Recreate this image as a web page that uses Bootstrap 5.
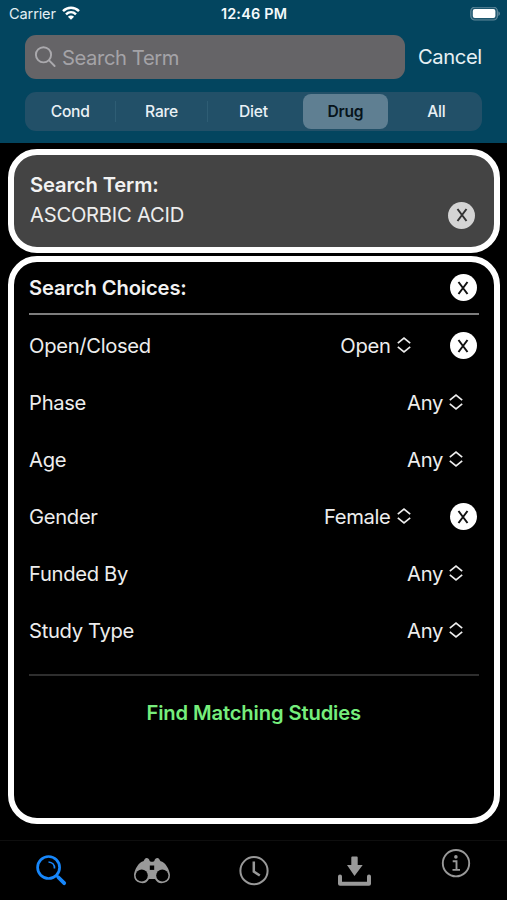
<!DOCTYPE html>
<html lang="en">
<head>
<meta charset="utf-8">
<meta name="viewport" content="width=device-width, initial-scale=1">
<title>Study Search</title>
<link href="https://cdn.jsdelivr.net/npm/bootstrap@5.3.0/dist/css/bootstrap.min.css" rel="stylesheet">
<style>
body{background:#000;color:#ededed;font-family:Inter,"Liberation Sans",sans-serif;font-size:20.2px;line-height:30px;letter-spacing:-.33px;height:900px;overflow:hidden}
.top-area{background:#03455f;height:143px;flex:none}
.status-line{height:27px;padding:0 7px 0 9px;font-size:14.6px;line-height:27px;letter-spacing:-.15px;color:#e4eff4}
.status-line>div{flex:1 1 0}
.carrier-text{padding-top:1px}
.wifi-icon{margin:0 0 1px 6px}
.clock-text{font-weight:600;font-size:14.4px;letter-spacing:.2px;color:#f4fafc;margin-left:-1px}
.search-line{margin-top:8px;padding-left:25px;height:44px}
.search-box{width:379.500px;height:44px;background:#656467;border-radius:11px;padding-left:9px;color:#a4a3a7;gap:6px}
.hint-text{padding-top:2px;letter-spacing:-.4px}
.cancel-link{color:#e6f0f4;margin-left:13.5px;text-decoration:none;letter-spacing:-.4px}
.segments{margin:13px 25px 0;height:39px;border-radius:11px;background:#225068;display:grid;grid-template-columns:repeat(5,1fr);align-items:center;font-size:15.6px;font-weight:500;letter-spacing:-.2px;line-height:35px;color:#e9f1f5}
.segments>div{text-align:center}
.segments .picked{background:#5f7f92;color:#06131b;font-weight:600;height:35px;margin:0 2.500px 0 3.500px;border-radius:8px}
.segments .divided{border-right:1px solid #2e5d74;height:21px;line-height:21px}
.panel{border:6.5px solid #fff;border-radius:29px;margin:0 7px 0 7.5px}
.term-panel{background:#444;height:104px;margin-top:6px;padding:15px 19px 0 16.500px}
.choice-panel{height:568px;margin-top:3px;padding:0 15px 0 15px}
.title-text{font-weight:600;letter-spacing:-.14px;color:#f2f2f2}
.term-text{letter-spacing:-.24px}
.clear-btn{width:27px;height:27px;border-radius:50%;background:#fff;border:0;padding:0;flex:none;display:flex;align-items:center;justify-content:center;margin-right:2.5px}
.term-panel .clear-btn{background:#d4d4d4;margin-right:0}
.head-row{height:51px}
.head-row .title-text,.choice-row>.me-auto{padding-left:.6px}
.rule{height:2px;background:#7d7d7d;flex:none}
.rule.dim{background:#2e2e2e;margin-top:15px}
.rows-wrap{padding-top:2px}
.choice-row{height:57px}
.pick{gap:6px}
.pick svg{margin-bottom:1px}
.pick.alone{margin-right:16px}
.pick.with-clear{margin-right:39px}
.find-btn{color:#76ee7c;font-weight:600;text-decoration:none;letter-spacing:-.13px}
.find-wrap{padding-top:22px}
.tabs-bar{margin-top:15.5px;height:60px;border-top:1px solid #0e0e0e}
.tabs-bar a{flex:1 1 0;display:flex;justify-content:center;align-items:flex-start}
svg{display:block;flex:none}
</style>
</head>
<body class="d-flex flex-column m-0">
<header class="top-area">
  <div class="status-line d-flex align-items-center">
    <div class="d-flex align-items-center"><span class="carrier-text">Carrier</span>
      <svg class="wifi-icon" width="18" height="14" viewBox="0 0 18 14" fill="none" stroke="#fff" stroke-width="2.5"><path d="M1 5.1C5.6.6 12.4.6 17 5.1M4 8.3c2.900-2.800 7.100-2.800 10 0"/><path d="M9 13.800 5.900 10.700c1.700-1.600 4.500-1.600 6.200 0z" fill="#fff" stroke="none"/></svg></div>
    <span class="clock-text">12:46 PM</span>
    <div class="d-flex justify-content-end"><svg width="31" height="14" viewBox="0 0 31 14"><rect x="1.800" y=".2" width="26.600" height="12.800" rx="4" fill="#1d566e" stroke="#5e8799" stroke-width="1.200"/><rect x="3.800" y="2" width="22.600" height="9" rx="2" fill="#fff"/><path d="M29.300 4.200c2.200.8 2.200 3.900 0 4.700z" fill="#5e8799"/></svg></div>
  </div>
  <div class="search-line d-flex align-items-center">
    <div class="search-box d-flex align-items-center">
      <svg width="22" height="22" viewBox="0 0 22 22" fill="none" stroke="#aaa9ad" stroke-width="1.900" stroke-linecap="round"><circle cx="9.500" cy="8.800" r="7.600"/><path d="m15.100 14.400 5.500 5.600"/></svg>
      <span class="hint-text">Search Term</span>
    </div>
    <a class="cancel-link" href="#">Cancel</a>
  </div>
  <div class="segments">
    <div class="divided">Cond</div><div class="divided">Rare</div><div>Diet</div><div class="picked">Drug</div><div>All</div>
  </div>
</header>
<main>
  <section class="panel term-panel">
    <div class="title-text">Search Term:</div>
    <div class="d-flex justify-content-between align-items-center"><span class="term-text">ASCORBIC ACID</span>
      <button class="clear-btn" aria-label="Clear"><svg width="12" height="14" viewBox="0 0 12 14" fill="none" stroke="#333" stroke-width="2"><path d="m1.500 1 9 12m0-12-9 12"/></svg></button></div>
  </section>
  <section class="panel choice-panel d-flex flex-column">
    <div class="head-row d-flex justify-content-between align-items-center"><span class="title-text">Search Choices:</span>
      <button class="clear-btn" aria-label="Clear"><svg width="12" height="14" viewBox="0 0 12 14" fill="none" stroke="#111" stroke-width="2"><path d="m1.500 1 9 12m0-12-9 12"/></svg></button></div>
    <div class="rule"></div>
    <div class="rows-wrap">
      <div class="choice-row d-flex align-items-center"><span class="me-auto">Open/Closed</span><span class="pick with-clear d-flex align-items-center">Open <svg width="14" height="16" viewBox="0 0 14 16" fill="none" stroke="#ededed" stroke-width="1.700"><path d="m.8 6.200 6.200-5 6.200 5M.8 9.800l6.200 5 6.200-5"/></svg></span><button class="clear-btn" aria-label="Clear"><svg width="12" height="14" viewBox="0 0 12 14" fill="none" stroke="#111" stroke-width="2"><path d="m1.500 1 9 12m0-12-9 12"/></svg></button></div>
      <div class="choice-row d-flex align-items-center"><span class="me-auto">Phase</span><span class="pick alone d-flex align-items-center">Any <svg width="14" height="16" viewBox="0 0 14 16" fill="none" stroke="#ededed" stroke-width="1.700"><path d="m.8 6.200 6.200-5 6.200 5M.8 9.800l6.200 5 6.200-5"/></svg></span></div>
      <div class="choice-row d-flex align-items-center"><span class="me-auto">Age</span><span class="pick alone d-flex align-items-center">Any <svg width="14" height="16" viewBox="0 0 14 16" fill="none" stroke="#ededed" stroke-width="1.700"><path d="m.8 6.200 6.200-5 6.200 5M.8 9.800l6.200 5 6.200-5"/></svg></span></div>
      <div class="choice-row d-flex align-items-center"><span class="me-auto">Gender</span><span class="pick with-clear d-flex align-items-center">Female <svg width="14" height="16" viewBox="0 0 14 16" fill="none" stroke="#ededed" stroke-width="1.700"><path d="m.8 6.200 6.200-5 6.200 5M.8 9.800l6.200 5 6.200-5"/></svg></span><button class="clear-btn" aria-label="Clear"><svg width="12" height="14" viewBox="0 0 12 14" fill="none" stroke="#111" stroke-width="2"><path d="m1.500 1 9 12m0-12-9 12"/></svg></button></div>
      <div class="choice-row d-flex align-items-center"><span class="me-auto">Funded By</span><span class="pick alone d-flex align-items-center">Any <svg width="14" height="16" viewBox="0 0 14 16" fill="none" stroke="#ededed" stroke-width="1.700"><path d="m.8 6.200 6.200-5 6.200 5M.8 9.800l6.200 5 6.200-5"/></svg></span></div>
      <div class="choice-row d-flex align-items-center"><span class="me-auto">Study Type</span><span class="pick alone d-flex align-items-center">Any <svg width="14" height="16" viewBox="0 0 14 16" fill="none" stroke="#ededed" stroke-width="1.700"><path d="m.8 6.200 6.200-5 6.200 5M.8 9.800l6.200 5 6.200-5"/></svg></span></div>
    </div>
    <div class="rule dim"></div>
    <div class="text-center find-wrap"><a class="find-btn" href="#">Find Matching Studies</a></div>
  </section>
</main>
<nav class="tabs-bar d-flex">
  <a href="#" aria-label="Search"><svg width="32" height="60" viewBox="0 0 32 60" fill="none" stroke="#1787fb"><circle cx="13.600" cy="26.500" r="11" stroke-width="2.700"/><path d="M13.500 21c3.500.2 6.200 2.800 6 6.500" stroke-width="1.700"/><path d="m21.300 34.300 2.200 2.200" stroke-width="2.500"/><path d="m23.500 36.500 5.700 5.700" stroke-width="3.800" stroke-linecap="round"/></svg></a>
  <a href="#" aria-label="Browse"><svg width="38" height="60" viewBox="0 0 38 60"><path d="M1 34c.3-3.600 2.800-9.500 6-12 1.800-1.400 3.300-1.300 4-2.400.7-1.400 1.200-2.600 2.600-2.600 1.600 0 2.500 1 3 2.800.4.900.9 1 2.400 1s2-.1 2.400-1c.5-1.800 1.400-2.800 3-2.800 1.400 0 1.900 1.200 2.600 2.600.7 1.100 2.200 1 4 2.400 3.200 2.500 5.700 8.400 6 12a8 8 0 0 1-15 4h-6A8 8 0 0 1 1 34z" fill="#999"/><circle cx="8.700" cy="34.500" r="6.100"/><circle cx="29.300" cy="34.500" r="6.100"/><path d="M16.800 24.500h4.400v4.400h-4.400z"/></svg></a>
  <a href="#" aria-label="History"><svg width="32" height="60" viewBox="0 0 32 60" fill="none" stroke="#999" stroke-width="2"><circle cx="16" cy="29.700" r="13.600"/><path d="M15.800 20.500v10l6 4" stroke-width="2.500"/></svg></a>
  <a href="#" aria-label="Downloads"><svg width="36" height="60" viewBox="0 0 36 60"><path d="M14.300 16.500q0-1 1-1h4.400q1 0 1 1V24h5L17.500 35 10 24h4.300z" fill="#999"/><path d="M3 35.500v7.200h29v-7.200" fill="none" stroke="#999" stroke-width="4" stroke-linecap="round" stroke-linejoin="round"/></svg></a>
  <a href="#" aria-label="About"><svg width="30" height="60" viewBox="0 0 30 60" fill="none" stroke="#999" stroke-width="1.900"><circle cx="15" cy="22.200" r="13.200"/><circle cx="14.900" cy="15.900" r="1.800" fill="#999" stroke="none"/><path d="M11.700 20.200h3.800v8.700m-4 0h7.500"/></svg></a>
</nav>
<script src="https://cdn.jsdelivr.net/npm/bootstrap@5.3.0/dist/js/bootstrap.bundle.min.js"></script>
</body>
</html>
